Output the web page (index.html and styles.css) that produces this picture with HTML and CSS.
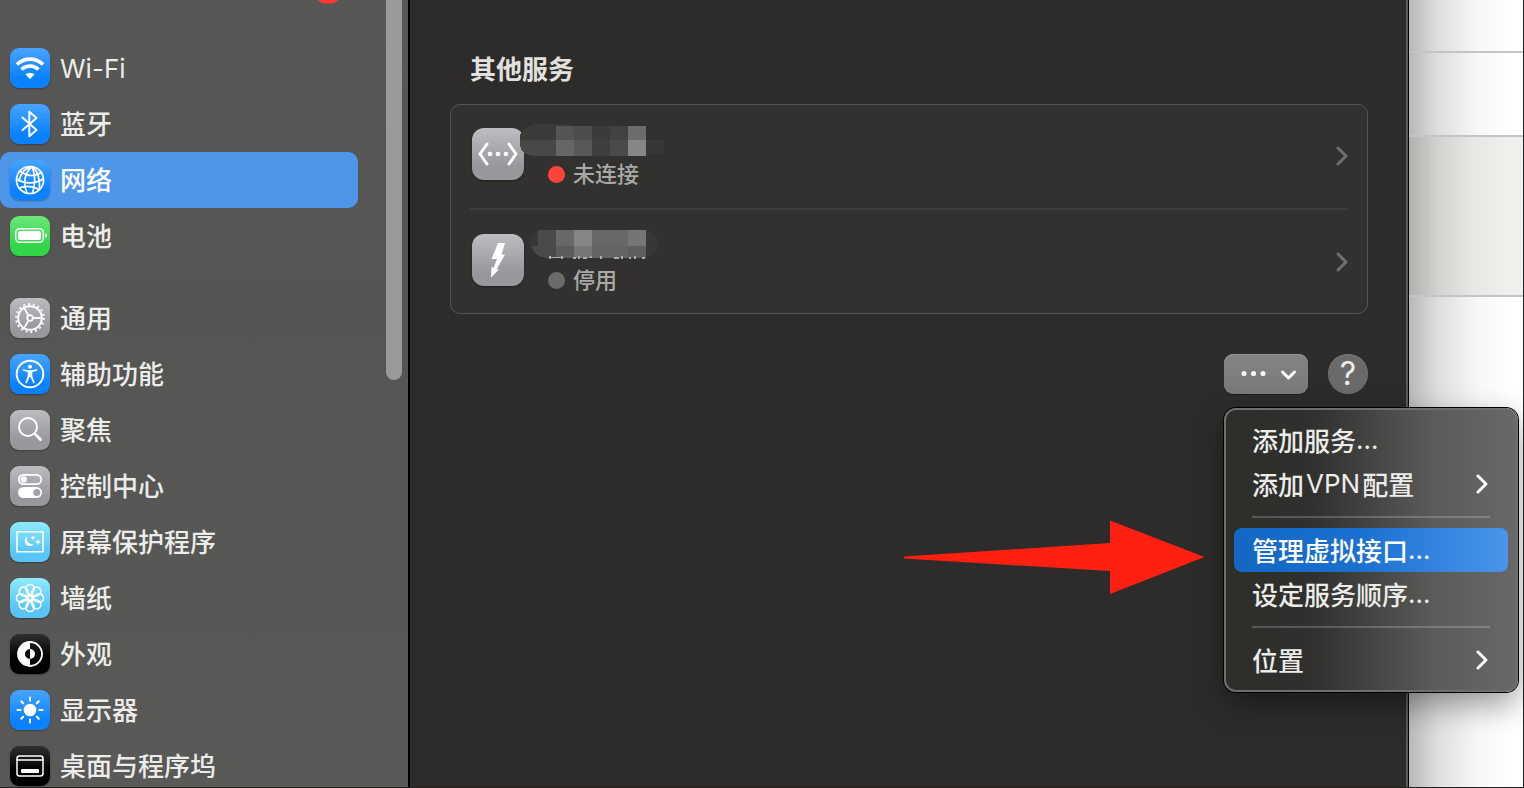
FILE: index.html
```html
<!DOCTYPE html>
<html lang="zh-CN">
<head>
    <meta charset="UTF-8">
    <meta name="viewport" content="width=device-width, initial-scale=1.0">
    <title>网络</title>
    <link rel="stylesheet" href="styles.css">
</head>
<body>
    <div class="desktop">
        <nav class="sidebar">
            <span class="badge"></span>
            <span class="scrollbar"></span>

            <div class="nav-group">
                <a class="nav-item" href="#wifi">
                    <svg class="tile blue" viewBox="0 0 40 40">
                        <path d="M7 16.500a18.500 18.500 0 0 1 26 0" stroke-width="3.600" stroke-linecap="butt"/>
                        <path d="M11.500 21.500a12 12 0 0 1 17 0" stroke-width="3.600" stroke-linecap="butt"/>
                        <path class="solid" d="M24.500 26.300a7 7 0 0 0-9 0l3.800 4.200a1 1 0 0 0 1.400 0z"/>
                    </svg>
                    <span class="latin">Wi-Fi</span>
                </a>
                <a class="nav-item" href="#bluetooth">
                    <svg class="tile blue" viewBox="0 0 40 40">
                        <path d="M12.500 13.500l14 12.500-7.200 6.300V7.700l7.200 6.300-14 12"/>
                    </svg>
                    <span>蓝牙</span>
                </a>
                <a class="nav-item active" href="#network">
                    <svg class="tile blue" viewBox="0 0 40 40">
                        <g stroke-width="1.700">
                            <circle cx="20" cy="20" r="13.500"/>
                            <path d="M22 6.700c-7 6-9.500 16-5 26.300M22 6.700c3.500 8 3.500 17 .5 26.500M22 6.700c-6 1-11 6-13 14M22 6.700c4.500 3 8 8 7.500 22.500"/>
                            <path d="M10 11c7 5.500 14 6 21.500 1.500M6.600 19c8 5 18 5.500 26.500 0M9 28c7-2.500 14-2 20 1.500"/>
                        </g>
                    </svg>
                    <span>网络</span>
                </a>
                <a class="nav-item" href="#battery">
                    <svg class="tile green" viewBox="0 0 40 40">
                        <rect x="5.700" y="12.700" width="27.600" height="13.600" rx="4" stroke-width="1.500"/>
                        <rect class="solid" x="8" y="15" width="23" height="9" rx="2"/>
                        <path class="solid" d="M35 17.200q2 .5 2 2.300t-2 2.300z"/>
                    </svg>
                    <span>电池</span>
                </a>
            </div>

            <div class="nav-group">
                <a class="nav-item" href="#general">
                    <svg class="tile gray" viewBox="0 0 40 40">
                        <circle cx="20" cy="20" r="11.800" stroke-width="2"/>
                        <circle cx="20" cy="20" r="13.900" stroke-width="2" stroke-dasharray="2 2.850" stroke-linecap="butt"/>
                        <circle cx="20" cy="20" r="2.800" stroke-width="1.800"/>
                        <path d="M22.800 20H32M18.500 17.500l-4.700-8M18.500 22.500l-4.700 8" stroke-width="1.800"/>
                    </svg>
                    <span>通用</span>
                </a>
                <a class="nav-item" href="#accessibility">
                    <svg class="tile blue" viewBox="0 0 40 40">
                        <circle cx="20" cy="20" r="13.300" stroke-width="2"/>
                        <circle class="solid" cx="20" cy="12.800" r="2"/>
                        <path class="solid" d="M13.500 15.300l5 .9h3l5-.9c1-.1 1.200 1.200.2 1.500l-4.400 1.200v4l2.300 6.300c.3 1.100-1.100 1.500-1.600.5L20.500 23h-1L17 28.800c-.5 1-1.900.6-1.600-.5l2.300-6.300v-4l-4.400-1.200c-1-.3-.8-1.600.2-1.500z"/>
                    </svg>
                    <span>辅助功能</span>
                </a>
                <a class="nav-item" href="#spotlight">
                    <svg class="tile gray" viewBox="0 0 40 40">
                        <circle cx="18" cy="17" r="9" stroke-width="2"/>
                        <path d="M24.800 23.800l2 2"/>
                        <path d="M27 26l3.500 3.500" stroke-width="3"/>
                    </svg>
                    <span>聚焦</span>
                </a>
                <a class="nav-item" href="#control-center">
                    <svg class="tile gray" viewBox="0 0 40 40">
                        <rect x="8.800" y="8.800" width="22.400" height="9.400" rx="4.700" stroke-width="1.700"/>
                        <circle class="solid" cx="13.700" cy="13.500" r="3.200"/>
                        <rect class="solid" x="8" y="21" width="24" height="11" rx="5.500"/>
                        <circle class="knob" cx="26.800" cy="26.500" r="3.500"/>
                    </svg>
                    <span>控制中心</span>
                </a>
                <a class="nav-item" href="#screensaver">
                    <svg class="tile cyan" viewBox="0 0 40 40">
                        <rect x="7" y="9.700" width="26" height="20" stroke-width="1.600"/>
                        <path class="solid" d="M17 14.500a5.200 5.200 0 1 0 7 7.500 5.800 5.800 0 0 1-7-7.500z"/>
                        <path class="solid" d="M24 13l.8 2 2 .8-2 .8-.8 2-.8-2-2-.8 2-.8zM29 17l.9 2.100 2.100.9-2.100.9L29 23l-.9-2.100L26 20l2.100-.9z" transform="translate(-1 0)"/>
                    </svg>
                    <span>屏幕保护程序</span>
                </a>
                <a class="nav-item" href="#wallpaper">
                    <svg class="tile cyan" viewBox="0 0 40 40">
                        <g stroke-width="1.500">
                            <path id="petal" d="M18.800 18.500l-2.900-6.500a4.300 4.300 0 1 1 8.200 0l-2.900 6.500"/>
                            <use href="#petal" transform="rotate(45 20 20)"/>
                            <use href="#petal" transform="rotate(90 20 20)"/>
                            <use href="#petal" transform="rotate(135 20 20)"/>
                            <use href="#petal" transform="rotate(180 20 20)"/>
                            <use href="#petal" transform="rotate(225 20 20)"/>
                            <use href="#petal" transform="rotate(270 20 20)"/>
                            <use href="#petal" transform="rotate(315 20 20)"/>
                            <circle cx="20" cy="20" r="2.200"/>
                        </g>
                    </svg>
                    <span>墙纸</span>
                </a>
                <a class="nav-item" href="#appearance">
                    <svg class="tile black" viewBox="0 0 40 40">
                        <circle cx="20" cy="20" r="12" stroke-width="1.800"/>
                        <path class="solid" d="M20 8a12 12 0 0 0 0 24v-7a5 5 0 0 1 0-10z"/>
                        <path class="solid" d="M20 15a5 5 0 0 1 0 10z"/>
                    </svg>
                    <span>外观</span>
                </a>
                <a class="nav-item" href="#displays">
                    <svg class="tile blue" viewBox="0 0 40 40">
                        <circle class="solid" cx="20" cy="20" r="6.300"/>
                        <path d="M20 7.500v3M20 29.500v3M7.500 20h3M29.500 20h3M11.200 11.200l2 2M26.800 26.800l2 2M28.800 11.200l-2 2M13.200 26.800l-2 2"/>
                    </svg>
                    <span>显示器</span>
                </a>
                <a class="nav-item" href="#dock">
                    <svg class="tile black" viewBox="0 0 40 40">
                        <rect x="7" y="10" width="26" height="20" rx="2.500" stroke-width="1.500"/>
                        <path d="M7 14h26" stroke-width="1.500"/>
                        <rect class="solid" x="11" y="23" width="18" height="4" rx="1"/>
                    </svg>
                    <span>桌面与程序坞</span>
                </a>
            </div>
        </nav>

        <main class="content">
            <h2>其他服务</h2>

            <div class="services">
                <button class="service" type="button">
                    <svg class="service-icon" viewBox="0 0 52 52">
                        <path d="M15 16L8 26l7 10M37 16l7 10-7 10"/>
                        <circle class="solid" cx="18" cy="26" r="2.300"/>
                        <circle class="solid" cx="26" cy="26" r="2.300"/>
                        <circle class="solid" cx="34" cy="26" r="2.300"/>
                    </svg>
                    <span class="service-info">
                        <span class="service-name">
                            <svg class="mosaic" viewBox="0 0 144 32" shape-rendering="crispEdges">
                                <path fill="#3a3a38" d="M6 4Q10 0 18 0h26l10 2h72v30H18Q0 32 0 20V12Q1 7 6 4z"/>
                                <path fill="#484846" d="M0 16h36v16H18Q0 32 0 20z"/>
                                <path fill="#373735" d="M126 16h18v14h-18z"/>
                                <path fill="#545452" d="M36 2h18v14H36z"/>
                                <path fill="#666664" d="M36 16h18v16H36z"/>
                                <path fill="#4d4d4b" d="M54 2h18v14H54z"/>
                                <path fill="#585856" d="M54 16h18v16H54z"/>
                                <path fill="#3b3b39" d="M72 2h18v14H72z"/>
                                <path fill="#3f3f3d" d="M72 16h18v16H72z"/>
                                <path fill="#424240" d="M90 2h18v14H90z"/>
                                <path fill="#4a4a48" d="M90 16h18v16H90z"/>
                                <path fill="#6c6c6a" d="M108 2h18v14h-18z"/>
                                <path fill="#868684" d="M108 16h18v16h-18z"/>
                            </svg>
                        </span>
                        <span class="status"><i class="dot red"></i>未连接</span>
                    </span>
                    <svg class="chevron" viewBox="0 0 12 20"><path d="M2 2l8 8-8 8"/></svg>
                </button>
                <hr>
                <button class="service" type="button">
                    <svg class="service-icon" viewBox="0 0 52 52">
                        <path class="solid" d="M26 9h7l-3.500 11.500h3.500L24.500 35.500l2.700-.2L19 43.500l.5-11.500 1.800 2.200L25 25h-5.500z"/>
                    </svg>
                    <span class="service-info">
                        <span class="service-name">
                            <svg class="mosaic" viewBox="0 0 144 32" shape-rendering="crispEdges">
                                <path fill="#373735" d="M22 0h104q12 3 12 14t-12 13H30Q10 28 10 14 10 3 22 0z"/>
                                <path fill="#4a4a48" d="M18 0h18v28H26Q14 26 12 16h6z"/>
                                <path fill="#686866" d="M36 0h90v16H36z"/>
                                <path fill="#858583" d="M54 0h18v16H54z"/>
                                <path fill="#757573" d="M108 0h18v16h-18z"/>
                                <path fill="#5c5c5a" d="M36 16h18v12H36z"/>
                                <path fill="#767674" d="M54 16h18v12H54z"/>
                                <path fill="#646462" d="M72 16h36v12H72z"/>
                                <path fill="#5e5e5c" d="M108 16h18v12h-18z"/>
                                <path fill="#aaaaa8" d="M29 26h2v3h-2zM31 27h10v1H31zM41 26h2v3h-2zM53 27h3v2h-3zM58 26h2v3h-2zM63 27h4v2h-4zM70 26h2v2h-2zM80 26h2v3h-2zM94 27h5v2h-5zM101 26h2v3h-2zM109 27h2v2h-2zM114 26h2v3h-2zM122 27h3v2h-3z"/>
                            </svg>
                        </span>
                        <span class="status"><i class="dot"></i>停用</span>
                    </span>
                    <svg class="chevron" viewBox="0 0 12 20"><path d="M2 2l8 8-8 8"/></svg>
                </button>
            </div>

            <div class="toolbar">
                <div class="more">
                    <button class="more-button" type="button" aria-label="更多">
                        <svg viewBox="0 0 84 40">
                            <circle class="solid" cx="20" cy="19.500" r="2.500"/>
                            <circle class="solid" cx="29.500" cy="19.500" r="2.500"/>
                            <circle class="solid" cx="39" cy="19.500" r="2.500"/>
                            <path d="M58.500 18l6 6 6-6"/>
                        </svg>
                    </button>

                    <div class="menu">
                        <button type="button">添加服务<span class="latin">...</span></button>
                        <button type="button">添加<span class="latin word">VPN</span>配置<svg class="chevron" viewBox="0 0 12 20"><path d="M2 2l8 8-8 8"/></svg></button>
                        <hr>
                        <button class="selected" type="button">管理虚拟接口<span class="latin">...</span></button>
                        <button type="button">设定服务顺序<span class="latin">...</span></button>
                        <hr>
                        <button type="button">位置<svg class="chevron" viewBox="0 0 12 20"><path d="M2 2l8 8-8 8"/></svg></button>
                    </div>

                    <svg class="arrow" viewBox="0 0 302 76"><path d="M1 37.500L207 24V1.500L301.500 38 207 75V52L1 39.500z"/></svg>
                </div>
                <button class="help" type="button">?</button>
            </div>
        </main>

        <aside class="backdrop">
            <div class="strip first"></div>
            <div class="strip second"></div>
            <div class="strip tinted"></div>
        </aside>
    </div>
</body>
</html>
```
FILE: styles.css
```css
* {
    box-sizing: border-box;
}
body {
    margin: 0;
    background: #2d2c2a;
    color: #ececea;
    font-family: Inter, "Noto Sans CJK SC", sans-serif;
    font-size: 26px;
}
button {
    padding: 0;
    border: none;
    background: none;
    color: inherit;
    font: inherit;
    text-align: left;
}
svg {
    fill: none;
    stroke: white;
    stroke-width: 2;
    stroke-linecap: round;
    stroke-linejoin: round;
}
.solid {
    fill: white;
    stroke: none;
}
.latin {
    font-weight: 400;
}
.desktop {
    display: grid;
    grid-template-columns: 410px 1fr 116px;
    height: 100vh;
    overflow: hidden;
    border-bottom: 1px solid #222;
}

/* sidebar */
.sidebar {
    position: relative;
    padding: 40px 50px 0 0;
    overflow: hidden;
    background: linear-gradient(#575756, #555553 40%, #595957);
    border-right: 2px solid #000;
}
.badge {
    position: absolute;
    top: -28px;
    left: 312px;
    width: 32px;
    height: 32px;
    border-radius: 50%;
    background: #ff3b30;
}
.scrollbar {
    position: absolute;
    top: 0;
    right: 6px;
    width: 16px;
    height: 380px;
    border-radius: 0 0 8px 8px;
    background: #9a9a98;
}
.nav-group {
    margin-bottom: 26px;
}
.nav-item {
    display: flex;
    align-items: center;
    gap: 10px;
    height: 56px;
    padding-left: 10px;
    color: inherit;
    font-weight: 500;
    line-height: 38px;
    text-decoration: none;
}
.nav-item span {
    padding-top: 2px;
}
.nav-item.active {
    border-radius: 10px;
    background: #4e96e9;
    color: white;
}
.tile {
    width: 40px;
    height: 40px;
    border-radius: 9px;
    box-shadow: 0 1px 2px rgba(0, 0, 0, 0.3);
}
.blue {
    background: linear-gradient(#47a4ff, #0a82ff 75%);
}
.green {
    background: linear-gradient(#6ce879, #30d648 75%);
}
.gray {
    background: linear-gradient(#bdbcc1, #98979c 75%);
}
.cyan {
    background: linear-gradient(#8eeafe, #58c5f6 75%);
}
.black {
    background: linear-gradient(#303030, #000 60%);
}
.knob {
    fill: #a3a2a7;
    stroke: none;
}

/* network services */
.content {
    position: relative;
    z-index: 1;
    padding: 50px 38px 0 40px;
    border-right: 2px solid #5a5a59;
    background: #2d2c2a;
}
h2 {
    margin: 0 0 14px;
    padding-left: 20px;
    color: #e1e1df;
    font-size: 26px;
    font-weight: 700;
    line-height: 40px;
}
.services {
    padding: 1px 19px;
    border: 1px solid #555452;
    border-radius: 10px;
    background: #32312f;
}
.services hr {
    height: 2px;
    margin: 2px 0;
    border: none;
    background: #3e3d3b;
}
.service {
    display: flex;
    align-items: center;
    width: 100%;
    height: 100px;
}
.service-icon {
    align-self: flex-start;
    width: 52px;
    height: 52px;
    margin: 22px 24px 0 2px;
    border-radius: 12px;
    background: linear-gradient(#bdbcc1, #98979c 75%);
    box-shadow: 0 1px 2px rgba(0, 0, 0, 0.4);
    stroke-width: 3;
}
.service-info {
    flex: 1;
    align-self: flex-start;
    padding-top: 22px;
}
.service-name {
    position: relative;
    display: block;
    height: 30px;
}
.mosaic {
    position: absolute;
    top: -4px;
    left: -28px;
    width: 144px;
    height: 32px;
    stroke: none;
}
.status {
    display: flex;
    align-items: center;
    gap: 8px;
    color: #a9a9a7;
    font-size: 22px;
    font-weight: 500;
    line-height: 32px;
}
.dot {
    width: 17px;
    height: 17px;
    border-radius: 50%;
    background: #6b6b69;
}
.dot.red {
    background: #ff453a;
}
.chevron {
    width: 12px;
    height: 20px;
    stroke-width: 3;
}
.service .chevron {
    stroke: #70706e;
}

.toolbar {
    display: flex;
    justify-content: flex-end;
    gap: 20px;
    margin-top: 40px;
}
.more {
    position: relative;
}
.more-button {
    display: block;
    width: 84px;
    height: 40px;
    border-radius: 9px;
    background: linear-gradient(#858482, #7a7977);
    box-shadow: 0 1px 1px rgba(0, 0, 0, 0.4), inset 0 1px #959492;
}
.more-button svg {
    display: block;
    stroke-width: 3;
}
.help {
    width: 40px;
    height: 40px;
    border-radius: 50%;
    background: #6b6a68;
    box-shadow: inset 0 1px #7b7a78;
    font-size: 32px;
    line-height: 40px;
    text-align: center;
}

/* drop-down menu */
.menu {
    position: absolute;
    top: 54px;
    left: 0;
    width: 294px;
    padding: 8px;
    border: 2px solid #6e6e6c;
    border-radius: 12px;
    background: linear-gradient(90deg, #2d2e29, #30302e 30%, #444442 50%, #5b5b59 72%, #686866);
    box-shadow: 0 0 0 1px #000, 0 12px 32px rgba(0, 0, 0, 0.4);
}
.menu button {
    display: flex;
    align-items: center;
    width: 100%;
    height: 44px;
    padding: 0 20px 2px 18px;
    border-radius: 8px;
    font-weight: 500;
}
.menu button.selected {
    background: linear-gradient(90deg, #1467c2, #1a6fd0 45%, #4a95eb);
    color: white;
}
.menu hr {
    height: 2px;
    margin: 10px 18px;
    border: none;
    background: rgba(255, 255, 255, 0.2);
}
.menu .word {
    margin: 0 2px;
}
.menu .chevron {
    margin: 2px 0 0 auto;
}
.arrow {
    position: absolute;
    top: 165px;
    right: 103px;
    width: 302px;
    height: 76px;
    fill: #ff2012;
    stroke: none;
}

/* window behind */
.backdrop {
    border-right: 1px solid #222;
    border-left: 1px solid #000;
    background: linear-gradient(90deg, rgba(0, 0, 0, 0.28), rgba(0, 0, 0, 0.13) 25%, rgba(0, 0, 0, 0.03) 60%, transparent 90%), white;
}
.strip {
    border-bottom: 2px solid #c4c4c4;
}
.strip.first {
    height: 53px;
}
.strip.second {
    height: 84px;
}
.strip.tinted {
    height: 160px;
    background: rgba(110, 110, 80, 0.1);
}
```
